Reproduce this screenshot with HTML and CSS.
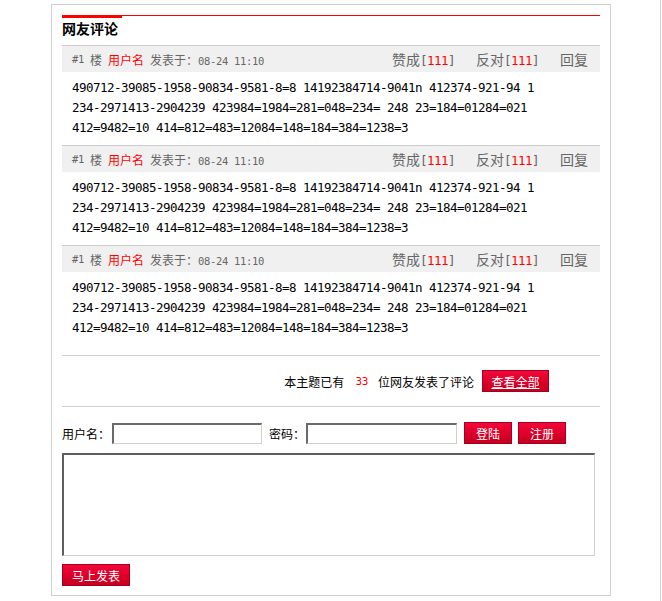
FILE: index.html
```html
<!DOCTYPE html>
<html lang="zh-CN">
<head>
<meta charset="utf-8">
<title>网友评论</title>
<link rel="stylesheet" href="styles.css">
</head>
<body>
<div class="page">
  <div class="box">
    <div class="rule"><div class="rule-thick"></div><div class="rule-thin"></div></div>
    <h2 class="title">网友评论</h2>

    <div class="comment">
      <div class="bar">
        <div class="meta">
          <span class="m">#1</span><span>楼</span><span class="user">用户名</span><span>发表于：<span class="m">08-24 11:10</span></span>
        </div>
        <div class="actions">
          <span>赞成<span class="mb">[<em>111</em>]</span></span>
          <span>反对<span class="mb">[<em>111</em>]</span></span>
          <span>回复</span>
        </div>
      </div>
      <div class="body">490712-39085-1958-90834-9581-8=8 14192384714-9041n 412374-921-94 1<br>234-2971413-2904239 423984=1984=281=048=234= 248 23=184=01284=021<br>412=9482=10 414=812=483=12084=148=184=384=1238=3</div>
    </div>

    <div class="comment">
      <div class="bar">
        <div class="meta">
          <span class="m">#1</span><span>楼</span><span class="user">用户名</span><span>发表于：<span class="m">08-24 11:10</span></span>
        </div>
        <div class="actions">
          <span>赞成<span class="mb">[<em>111</em>]</span></span>
          <span>反对<span class="mb">[<em>111</em>]</span></span>
          <span>回复</span>
        </div>
      </div>
      <div class="body">490712-39085-1958-90834-9581-8=8 14192384714-9041n 412374-921-94 1<br>234-2971413-2904239 423984=1984=281=048=234= 248 23=184=01284=021<br>412=9482=10 414=812=483=12084=148=184=384=1238=3</div>
    </div>

    <div class="comment">
      <div class="bar">
        <div class="meta">
          <span class="m">#1</span><span>楼</span><span class="user">用户名</span><span>发表于：<span class="m">08-24 11:10</span></span>
        </div>
        <div class="actions">
          <span>赞成<span class="mb">[<em>111</em>]</span></span>
          <span>反对<span class="mb">[<em>111</em>]</span></span>
          <span>回复</span>
        </div>
      </div>
      <div class="body">490712-39085-1958-90834-9581-8=8 14192384714-9041n 412374-921-94 1<br>234-2971413-2904239 423984=1984=281=048=234= 248 23=184=01284=021<br>412=9482=10 414=812=483=12084=148=184=384=1238=3</div>
    </div>

    <div class="summary">
      <span>本主题已有</span><span class="count m">33</span><span>位网友发表了评论</span>
      <a class="btn btn-all" href="#">查看全部</a>
    </div>

    <form class="login">
      <label class="lbl">用户名：</label><input class="field" type="text">
      <label class="lbl lbl-pw">密码：</label><input class="field field-pw" type="password">
      <button class="btn btn-sm" type="button">登陆</button>
      <button class="btn btn-sm" type="button">注册</button>
    </form>
    <textarea class="editor"></textarea>
    <div class="submit-row"><button class="btn btn-post" type="button">马上发表</button></div>
  </div>
</div>
</body>
</html>
```

FILE: styles.css
```css
html, body {
  margin: 0;
  padding: 0;
  background: #fff;
}
body {
  font-family: "Noto Sans CJK SC", sans-serif;
  font-size: 12px;
  color: #000;
}
.page {
  width: 661px;
  min-height: 601px;
  box-sizing: border-box;
  border-right: 1px solid #d0d0d0;
  padding-top: 4px;
  padding-left: 51px;
}
.box {
  width: 560px;
  box-sizing: border-box;
  border: 1px solid #cfcfcf;
  padding: 10px 10px 9px 10px;
}
.rule {
  display: flex;
  align-items: flex-start;
  height: 3px;
}
.rule-thick {
  width: 60px;
  height: 3px;
  background: #f00;
}
.rule-thin {
  flex: 1;
  height: 1px;
  background: #f00;
}
.title {
  margin: 0 0 7px 0;
  font-size: 14px;
  font-weight: bold;
  line-height: 20px;
  height: 20px;
}
.m {
  font-family: "DejaVu Sans Mono", monospace;
  font-size: 10.5px;
  letter-spacing: -0.32px;
}
.mb {
  font-family: "DejaVu Sans Mono", monospace;
  font-size: 12.5px;
  letter-spacing: -0.525px;
}
.bar {
  display: flex;
  align-items: center;
  justify-content: space-between;
  height: 26px;
  border-top: 1px solid #cccccc;
  background: #f0f0f0;
  padding: 0 12px 0 10px;
  color: #666;
}
.meta {
  display: flex;
  align-items: center;
  gap: 6px;
  font-size: 12px;
}
.user {
  color: #f00;
  font-size: 12px;
}
.actions {
  display: flex;
  align-items: center;
  gap: 21px;
  font-size: 14px;
  color: #666;
}
.actions em {
  font-style: normal;
  color: #f00;
}
.body {
  padding: 6px 10px 7px 10px;
  line-height: 20px;
  font-family: "DejaVu Sans Mono", monospace;
  font-size: 12.5px;
  letter-spacing: -0.525px;
  color: #000;
  white-space: nowrap;
}
.summary {
  margin-top: 10px;
  height: 50px;
  border-top: 1px solid #d0d0d0;
  border-bottom: 1px solid #d0d0d0;
  display: flex;
  align-items: center;
  justify-content: flex-end;
  padding-right: 51px;
  font-size: 12px;
  color: #000;
}
.count {
  color: #f00;
  font-size: 11px;
  margin: 0 10px 0 11px;
}
.btn {
  display: inline-flex;
  align-items: center;
  justify-content: center;
  box-sizing: border-box;
  height: 22px;
  border: 1px solid #a3001c;
  background: linear-gradient(#f4063a, #dc0029 55%, #c40020);
  color: #fff;
  font-family: "Noto Sans CJK SC", sans-serif;
  font-size: 12px;
  padding: 0;
  margin: 0;
  cursor: pointer;
}
.btn-all {
  width: 67px;
  margin-left: 8px;
  text-decoration: underline;
}
.login {
  display: flex;
  align-items: center;
  margin: 15px 0 0 0;
  height: 22px;
}
.lbl {
  font-size: 12px;
  color: #000;
  margin-right: 2px;
}
.lbl-pw {
  margin-left: 7px;
  margin-right: 1px;
}
.field {
  box-sizing: border-box;
  width: 150px;
  height: 21px;
  margin: 1px 0 0 0;
  padding: 0 2px;
  border-style: solid;
  border-width: 2px 1px 1px 2px;
  border-color: #6a6a6a #d4d0c8 #d4d0c8 #6a6a6a;
  background: #fff;
  font-size: 12px;
}
.field-pw {
  width: 151px;
}
.btn-sm {
  width: 48px;
  margin-left: 7px;
}
.btn-sm + .btn-sm {
  margin-left: 6px;
}
.editor {
  display: block;
  box-sizing: border-box;
  width: 533px;
  height: 103px;
  margin: 9px 0 0 0;
  padding: 2px;
  border-style: solid;
  border-width: 2px 1px 1px 2px;
  border-color: #5e5e5e #d4d0c8 #d4d0c8 #5e5e5e;
  resize: none;
  font-size: 12px;
}
.submit-row {
  display: flex;
  margin-top: 8px;
}
.btn-post {
  width: 68px;
  font-size: 12px;
}
```
